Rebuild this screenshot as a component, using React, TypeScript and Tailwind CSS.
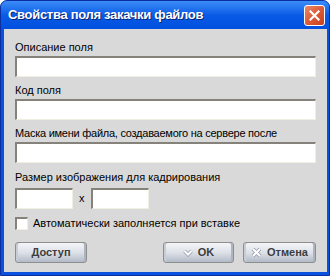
import React from "react";

const inputCls =
  "h-[21px] bg-white border-t-2 border-l-2 border-b border-r border-t-[#84827a] border-l-[#84827a] border-b-[#f1efe2] border-r-[#f1efe2]";

function Btn({ children, w }: { children: React.ReactNode; w: string }) {
  return (
    <div
      className={`${w} h-[21px] rounded-[3px] border border-[#8e8e8e] bg-gradient-to-b from-[#f4f5f8] via-[#dde1e8] to-[#b3bbc8] shadow-[inset_2px_0_0_#c8ccd4,inset_-2px_0_0_#aeb4c0] flex items-center justify-center gap-[5px] text-[11px] font-bold text-[#3d3d3d]`}
    >
      {children}
    </div>
  );
}

export default function App() {
  return (
    <div
      className="w-[330px] h-[276px] flex flex-col rounded-t-[7px] bg-[#0a52dd] border border-[#0b2fa0]"
      style={{ fontFamily: '"Liberation Sans", Arial, sans-serif' }}
    >
      <div className="h-[28px] flex items-center justify-between pl-[7px] pr-[4px] rounded-t-[6px] bg-gradient-to-b from-[#3c8cf8] via-[#0a5ae6] to-[#0050df]">
        <span className="text-white font-bold text-[13px] tracking-[-0.3px] [text-shadow:1px_1px_0_#0a2474]">
          Свойства поля закачки файлов
        </span>
        <div className="w-[21px] h-[21px] rounded-[3px] border border-white bg-gradient-to-br from-[#e88a6a] via-[#dd5a36] to-[#c8401e] flex items-center justify-center">
          <svg width="11" height="11" viewBox="0 0 11 11">
            <path d="M1.5 1.5 L9.5 9.5 M9.5 1.5 L1.5 9.5" stroke="white" strokeWidth="2.2" strokeLinecap="square" />
          </svg>
        </div>
      </div>
      <div className="flex-1 ml-[3px] mr-[2px] mb-[3px] bg-[#d9d9d9] pt-[12px] px-[11px] text-[11px] leading-[13px] text-black flex flex-col">
        <div>Описание поля</div>
        <div className={`${inputCls} mt-[2px]`} />
        <div className="mt-[7px]">Код поля</div>
        <div className={`${inputCls} mt-[2px]`} />
        <div className="mt-[7px] tracking-[-0.25px]">Маска имени файла, создаваемого на сервере после</div>
        <div className={`${inputCls} mt-[2px]`} />
        <div className="mt-[8px]">Размер изображения для кадрирования</div>
        <div className="mt-[4px] flex items-center">
          <div className={`${inputCls} w-[58px]`} />
          <span className="mx-[6px]">x</span>
          <div className={`${inputCls} w-[58px]`} />
        </div>
        <div className="mt-[8px] flex items-center gap-[5px]">
          <div className="w-[13px] h-[13px] bg-white border-t-2 border-l-2 border-b border-r border-t-[#84827a] border-l-[#84827a] border-b-[#f1efe2] border-r-[#f1efe2]" />
          <span>Автоматически заполняется при вставке</span>
        </div>
        <div className="mt-[12px] flex">
          <Btn w="w-[72px]">Доступ</Btn>
          <div className="flex-1" />
          <Btn w="w-[71px]">
            <svg width="10" height="8" viewBox="0 0 10 8">
              <path d="M1.5 2 L5 5.5 L8.5 2" stroke="#8d95a3" strokeWidth="3.4" fill="none" />
              <path d="M1.5 2 L5 5.5 L8.5 2" stroke="white" strokeWidth="2" fill="none" />
            </svg>
            OK
          </Btn>
          <div className="w-[9px]" />
          <Btn w="w-[73px]">
            <svg width="11" height="11" viewBox="0 0 11 11">
              <path d="M2 2 L9 9 M9 2 L2 9" stroke="#8d95a3" strokeWidth="3.6" />
              <path d="M2 2 L9 9 M9 2 L2 9" stroke="white" strokeWidth="2.2" />
            </svg>
            Отмена
          </Btn>
        </div>
      </div>
    </div>
  );
}
